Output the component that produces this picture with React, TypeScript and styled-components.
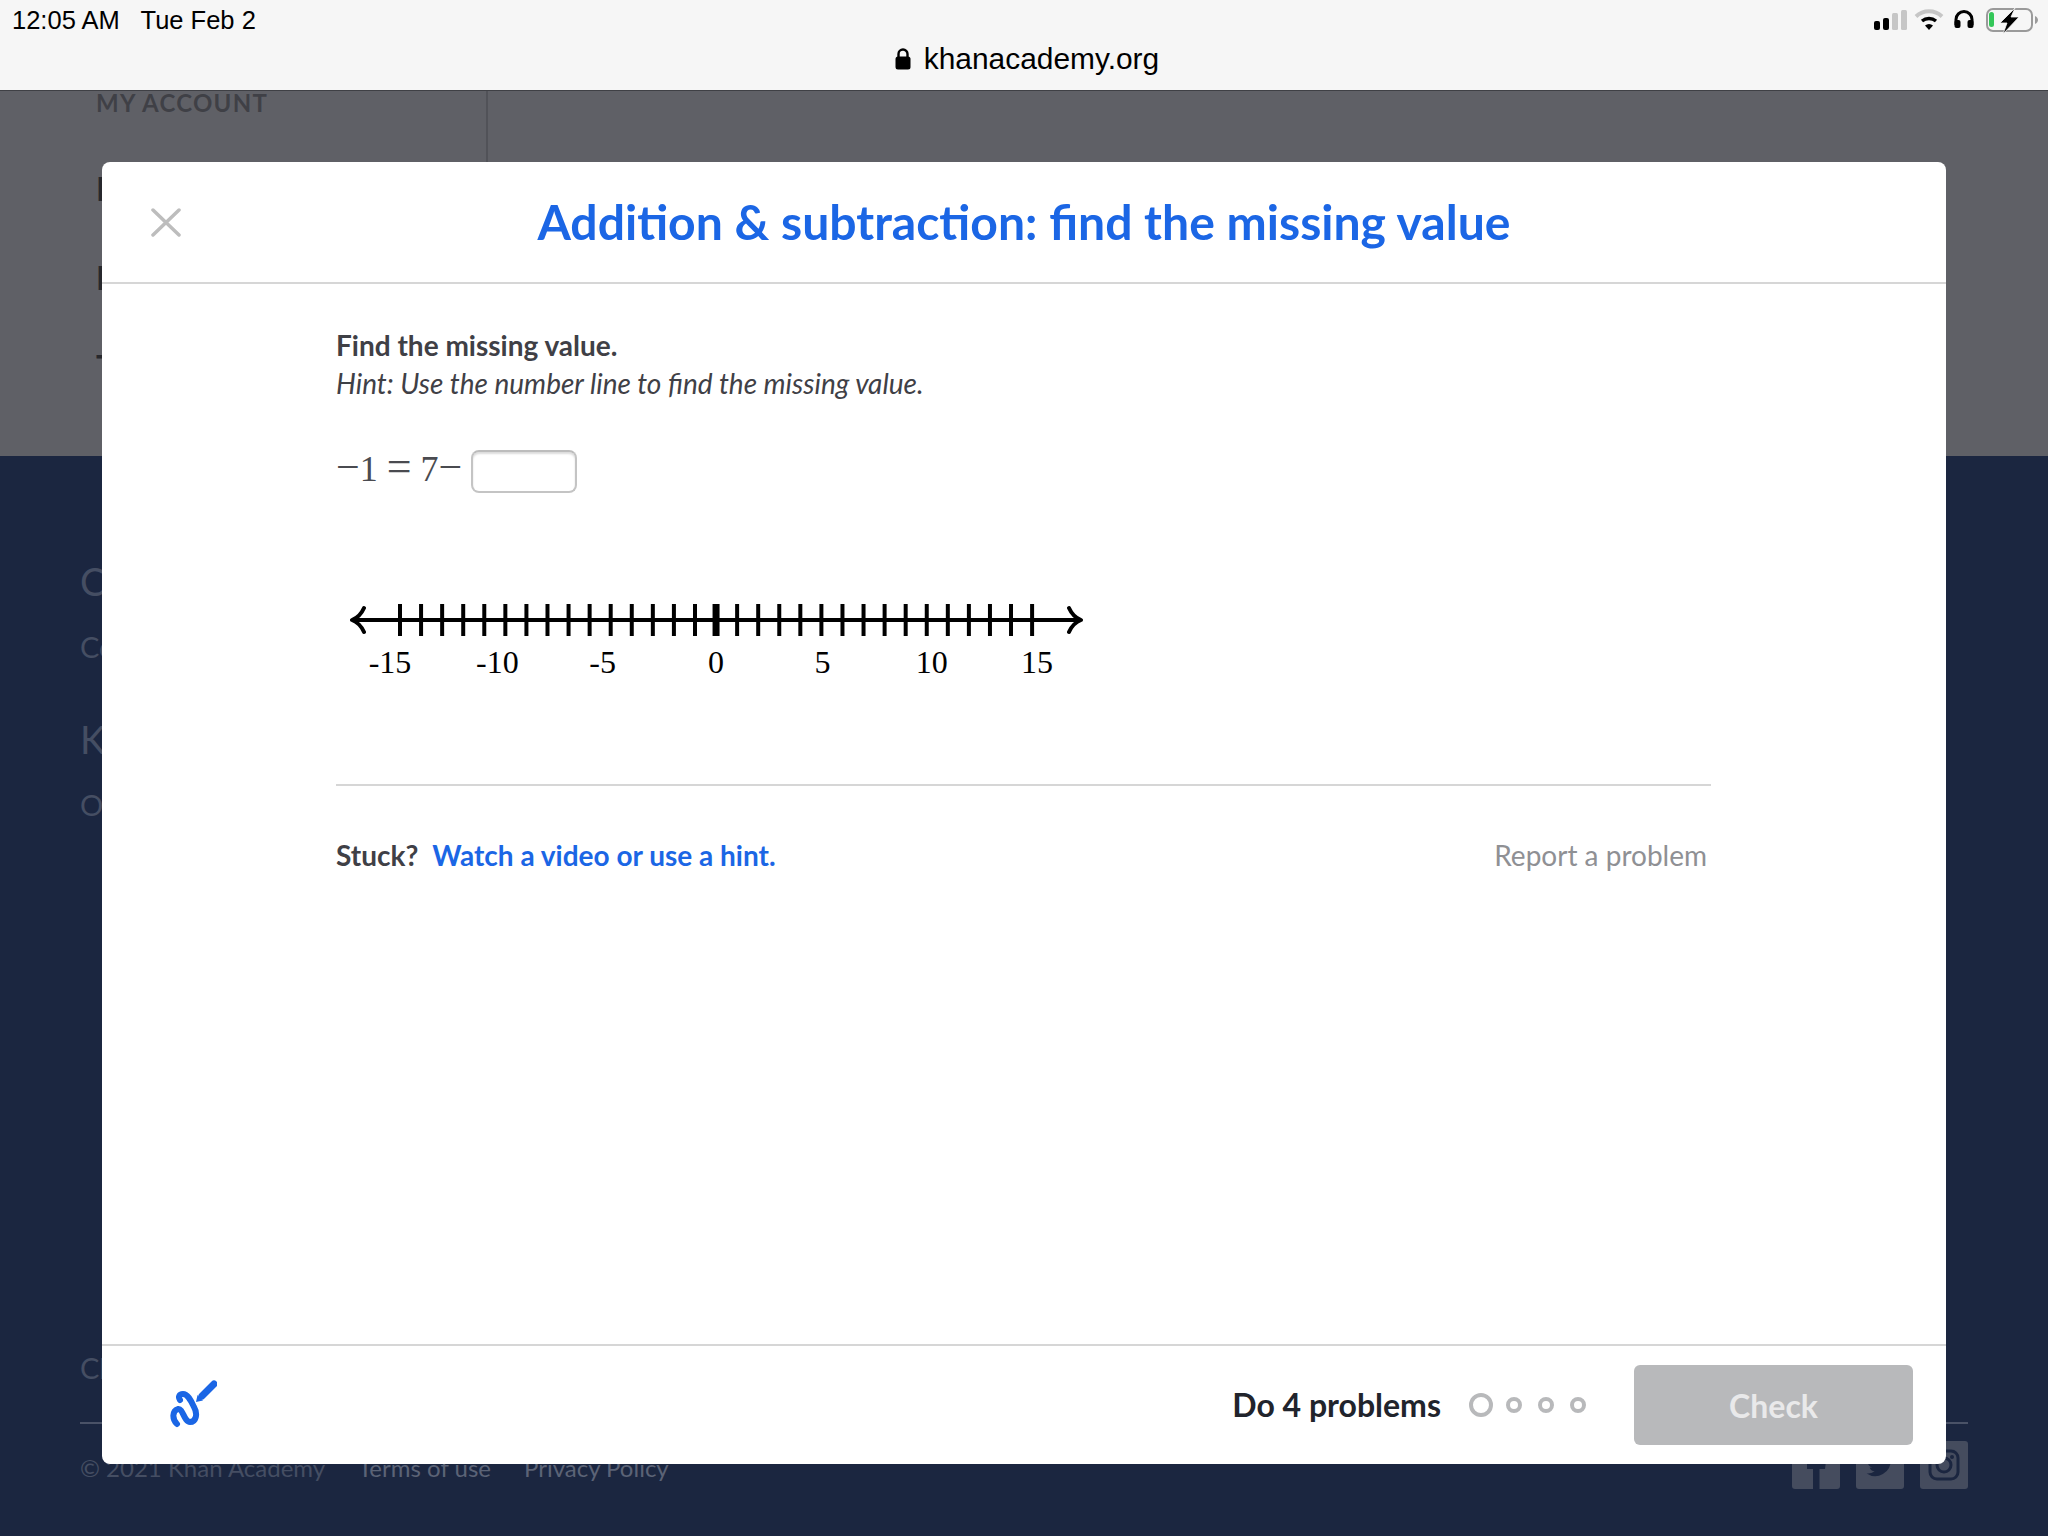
import React from 'react';
import styled, { createGlobalStyle } from 'styled-components';

const GlobalStyle = createGlobalStyle`
  html, body { margin: 0; padding: 0; }
  body { width: 2048px; height: 1536px; overflow: hidden; background: #1b2640; font-family: "Lato", "Liberation Sans", sans-serif; }
`;

const Page = styled.div`
  position: relative;
  width: 2048px;
  height: 1536px;
  display: flex;
  flex-direction: column;
  overflow: hidden;
`;

const StatusBar = styled.header`
  height: 91px;
  flex: none;
  box-sizing: border-box;
  background: #f6f6f6;
  border-bottom: 1px solid #3f4045;
  display: grid;
  grid-template-columns: 1fr auto 1fr;
  padding: 0 10px 0 12px;
  font-family: "Liberation Sans", sans-serif;
  color: #000;
`;

const Clock = styled.div`
  font-size: 25.5px;
  line-height: 40px;
  white-space: pre;
`;

const Address = styled.div`
  display: flex;
  align-items: center;
  gap: 13px;
  font-size: 29.9px;
  height: 89px;
  padding-top: 28px;
  margin-left: 4px;
  box-sizing: border-box;
`;

const StatusIcons = styled.div`
  display: flex;
  justify-content: flex-end;
  align-items: flex-start;
  padding-top: 8px;
`;

const Account = styled.section`
  height: 365px;
  flex: none;
  background: #5f6066;
  display: flex;
`;

const Sidebar = styled.aside`
  width: 488px;
  box-sizing: border-box;
  padding-left: 96px;
  border-right: 2px solid #515258;
  color: #3f4046;
  display: flex;
  flex-direction: column;
`;

const SidebarTitle = styled.div`
  font-size: 24px;
  font-weight: 700;
  letter-spacing: 1.25px;
  line-height: 26px;
  margin-top: -1px;
  margin-bottom: 53px;
`;

const SidebarItem = styled.div`
  font-size: 32px;
  line-height: 40px;
  font-weight: 700;
  margin-bottom: 49px;
  color: #27282d;
`;

const Footer = styled.footer`
  flex: 1;
  background: #1b2640;
  color: #454e63;
  padding: 0 80px;
  display: flex;
  flex-direction: column;
`;

const FooterHeading = styled.div`
  font-size: 38px;
  line-height: 46px;
`;

const FooterBody = styled.div`
  font-size: 29px;
  line-height: 34px;
  margin-top: 26px;
`;

const FooterBlock = styled.div<{ $top: number }>`
  margin-top: ${p => p.$top}px;
`;

const FooterRule = styled.div`
  height: 2px;
  background: #4a5267;
  margin-top: 37px;
`;

const FooterBottom = styled.div`
  display: flex;
  align-items: flex-start;
  justify-content: space-between;
  margin-top: 17px;
`;

const LegalRow = styled.div`
  display: flex;
  gap: 33px;
  font-size: 24px;
  line-height: 54px;
`;

const LegalLink = styled.span`
  color: #5b6376;
`;

const Socials = styled.div`
  display: flex;
  gap: 16px;
`;

const SocialBox = styled.div`
  width: 48px;
  height: 48px;
  border-radius: 3px;
  background: #454c5e;
  color: #1b2640;
  display: flex;
  align-items: center;
  justify-content: center;
`;

const Modal = styled.div`
  position: absolute;
  left: 102px;
  top: 162px;
  width: 1844px;
  height: 1302px;
  background: #fff;
  border-radius: 8px;
  display: flex;
  flex-direction: column;
  overflow: hidden;
`;

const ModalHeader = styled.div`
  height: 122px;
  flex: none;
  box-sizing: border-box;
  border-bottom: 2px solid #d6d6d6;
  display: flex;
  align-items: center;
  justify-content: center;
  position: relative;
`;

const CloseButton = styled.div`
  position: absolute;
  left: 49px;
  top: 46px;
  width: 30px;
  height: 29px;
  display: flex;
`;

const Title = styled.h1`
  margin: 0;
  font-size: 48.1px;
  font-weight: 700;
  color: #1b66e5;
  line-height: 1;
`;

const Exercise = styled.main`
  flex: 1;
  padding: 42px 235px 0 234px;
  display: flex;
  flex-direction: column;
`;

const Prompt = styled.div`
  font-size: 28px;
  line-height: 38px;
  font-weight: 700;
  color: #3f4046;
`;

const Hint = styled.div`
  font-size: 28px;
  font-style: italic;
  line-height: 38px;
  color: #3f4046;
`;

const Equation = styled.div`
  display: flex;
  align-items: center;
  margin-top: 48px;
  height: 43px;
  font-family: "Liberation Serif", serif;
  font-size: 36px;
  color: #4a4b50;
`;

const MathText = styled.span`
  margin-bottom: 6px;
  line-height: 40px;
`;

const Relation = styled.span`
  font-size: 44px;
  line-height: 0;
  margin: 0 9px;
`;

const Minus = styled.span`
  font-size: 42px;
  line-height: 0;
`;

const AnswerBox = styled.div`
  width: 106px;
  height: 43px;
  box-sizing: border-box;
  margin-left: 9px;
  border: 2px solid #c4c4c4;
  border-top-color: #bcbcbc;
  border-radius: 8px;
  box-shadow: inset 0 2px 2px #dcdcdc;
  background: #fff;
`;

const NumberLine = styled.svg`
  display: block;
  margin-top: 97px;
  width: 750px;
  height: 90px;
  flex: none;
`;

const Rule = styled.div`
  height: 2px;
  background: #d6d6d6;
  margin-top: 104px;
`;

const HelpRow = styled.div`
  display: flex;
  justify-content: space-between;
  align-items: center;
  margin-top: 51px;
  padding-right: 4px;
  font-size: 28px;
  line-height: 36px;
`;

const Stuck = styled.div`
  display: flex;
  gap: 14px;
  font-weight: 700;
  color: #3f4046;
`;

const HelpLink = styled.span`
  color: #1b66e5;
`;

const ReportLink = styled.span`
  color: #8f9094;
`;

const ModalFooter = styled.div`
  height: 120px;
  flex: none;
  box-sizing: border-box;
  border-top: 2px solid #d6d6d6;
  display: flex;
  align-items: center;
  padding: 0 33px 0 68px;
`;

const ScratchIcon = styled.svg`
  width: 47px;
  height: 48px;
  margin-top: -3px;
`;

const Progress = styled.div`
  margin-left: auto;
  display: flex;
  align-items: center;
`;

const ProgressLabel = styled.span`
  font-size: 32px;
  font-weight: 700;
  color: #21242c;
  margin-right: 28px;
  margin-top: -2px;
`;

const Dots = styled.div`
  display: flex;
  align-items: center;
  gap: 16px;
  margin-right: 48px;
`;

const Dot = styled.span<{ $current?: boolean }>`
  display: block;
  box-sizing: border-box;
  width: ${p => (p.$current ? 24 : 16)}px;
  height: ${p => (p.$current ? 24 : 16)}px;
  margin-right: ${p => (p.$current ? -3 : 0)}px;
  border: 4px solid #b8b9bb;
  border-radius: 50%;
`;

const CheckButton = styled.div`
  width: 279px;
  height: 80px;
  border-radius: 6px;
  background: #b8b9bb;
  color: #e9e9ea;
  font-size: 32px;
  font-weight: 700;
  display: flex;
  align-items: center;
  justify-content: center;
`;

const TICK_LEFT = 64;
const TICK_STEP = 21.07;
const ticks = Array.from({ length: 31 }, (_, i) => i - 15);
const labels = [
  { value: -15, dx: -10 },
  { value: -10, dx: -8 },
  { value: -5, dx: -8 },
  { value: 0, dx: 0 },
  { value: 5, dx: 1 },
  { value: 10, dx: 5 },
  { value: 15, dx: 5 },
];

const tickX = (v: number) => TICK_LEFT + (v + 15) * TICK_STEP;

const NumberLineChart = () => (
  <NumberLine viewBox="0 0 750 90">
    <path d="M16 30H745" stroke="#000" strokeWidth="4" fill="none" />
    <path
      d="M28 18Q24 27 16 30Q24 33 28 42M733 18Q737 27 745 30Q737 33 733 42"
      stroke="#000"
      strokeWidth="4"
      strokeLinecap="round"
      strokeLinejoin="round"
      fill="none"
    />
    {ticks.map(v => (
      <line key={v} x1={tickX(v)} x2={tickX(v)} y1="14" y2="46" stroke="#000" strokeWidth={v === 0 ? 7 : 4} />
    ))}
    {labels.map(l => (
      <text
        key={l.value}
        x={tickX(l.value) + l.dx}
        y="83"
        textAnchor="middle"
        fontFamily='"Liberation Serif", serif'
        fontSize="32"
        fill="#000"
      >
        {l.value}
      </text>
    ))}
  </NumberLine>
);

export default function App() {
  return (
    <Page>
      <GlobalStyle />
      <StatusBar>
        <Clock>{'12:05 AM   Tue Feb 2'}</Clock>
        <Address>
          <svg width="16" height="24" viewBox="0 0 16 24">
            <path d="M3.500 10V7a4.500 4.500 0 0 1 9 0v3" stroke="#000" strokeWidth="2.400" fill="none" />
            <rect x="0.500" y="9.500" width="15" height="13" rx="2.500" fill="#000" />
          </svg>
          khanacademy.org
        </Address>
        <StatusIcons>
          <svg width="166" height="30" viewBox="0 0 166 30">
            <rect x="2" y="13" width="6" height="9" rx="2" fill="#000" />
            <rect x="11" y="10" width="6" height="12" rx="2" fill="#000" />
            <rect x="20" y="5" width="6" height="17" rx="1.500" fill="#c6c6c6" />
            <rect x="29" y="2" width="6" height="20" rx="1.500" fill="#c6c6c6" />
            <path d="M44 8.500A19 19 0 0 1 70 8.500" stroke="#c6c6c6" strokeWidth="4" fill="none" />
            <path d="M50 13A11 11 0 0 1 64 13" stroke="#000" strokeWidth="3.400" fill="none" />
            <path d="M57 22L53 17.500A6 6 0 0 1 61 17.500z" fill="#000" />
            <path d="M84 17V11.500a8 8 0 0 1 16 0V17" stroke="#000" strokeWidth="3" fill="none" />
            <rect x="82.500" y="12" width="6" height="8" rx="2" fill="#000" />
            <rect x="95.500" y="12" width="6" height="8" rx="2" fill="#000" />
            <rect x="115" y="1" width="45" height="22" rx="6" stroke="#9a9a9a" strokeWidth="2" fill="none" />
            <rect x="117" y="4" width="5" height="15" rx="2.500" fill="#34c759" />
            <path d="M163 8c2 1 3 2.500 3 4s-1 3-3 4z" fill="#9a9a9a" />
            <path d="M143 0L128 15H135L131 26L147 9H139Z" fill="#000" stroke="#f6f6f6" strokeWidth="0.800" />
          </svg>
        </StatusIcons>
      </StatusBar>
      <Account>
        <Sidebar>
          <SidebarTitle>MY ACCOUNT</SidebarTitle>
          <SidebarItem>Profile</SidebarItem>
          <SidebarItem>Learner</SidebarItem>
          <SidebarItem>Teachers</SidebarItem>
        </Sidebar>
      </Account>
      <Footer>
        <FooterBlock $top={102}>
          <FooterHeading>Courses</FooterHeading>
          <FooterBody>Courses</FooterBody>
        </FooterBlock>
        <FooterBlock $top={52}>
          <FooterHeading>Khan Academy</FooterHeading>
          <FooterBody>Our mission</FooterBody>
        </FooterBlock>
        <FooterBlock $top={503}>
          <FooterBody>Change language</FooterBody>
        </FooterBlock>
        <FooterRule />
        <FooterBottom>
          <LegalRow>
            <span>© 2021 Khan Academy</span>
            <LegalLink>Terms of use</LegalLink>
            <LegalLink>Privacy Policy</LegalLink>
          </LegalRow>
          <Socials>
            <SocialBox>
              <svg width="30" height="48" viewBox="0 0 30 48"><path d="M12 48V28H6v-8h6v-6c0-5 3-9 8-9h5v8h-4c-2 0-2.500 1-2.500 2.500V20H25l-1 8h-5.500v20z" fill="currentColor" /></svg>
            </SocialBox>
            <SocialBox>
              <svg width="36" height="32" viewBox="0 0 24 24"><path d="M22 5.900c-.7.300-1.500.6-2.400.7.900-.5 1.500-1.300 1.800-2.300-.8.500-1.700.8-2.600 1a4.100 4.100 0 0 0-7 3.700A11.600 11.600 0 0 1 3.400 4.700a4.100 4.100 0 0 0 1.300 5.500c-.7 0-1.300-.2-1.900-.5 0 2 1.400 3.700 3.300 4.100-.6.200-1.200.2-1.900.1.500 1.600 2 2.800 3.800 2.800A8.300 8.300 0 0 1 2 18.400 11.600 11.600 0 0 0 20 8.100c.8-.6 1.500-1.300 2-2.200z" fill="currentColor" /></svg>
            </SocialBox>
            <SocialBox>
              <svg width="40" height="40" viewBox="0 0 40 40"><rect x="6" y="6" width="28" height="28" rx="7" fill="none" stroke="currentColor" strokeWidth="3" /><circle cx="20" cy="20" r="7" fill="none" stroke="currentColor" strokeWidth="3" /><circle cx="28" cy="12" r="2" fill="currentColor" /></svg>
            </SocialBox>
          </Socials>
        </FooterBottom>
      </Footer>
      <Modal>
        <ModalHeader>
          <CloseButton>
            <svg width="30" height="29" viewBox="0 0 30 29">
              <path d="M2 2L28 27M28 2L2 27" stroke="#bdbdbd" strokeWidth="3.500" strokeLinecap="round" />
            </svg>
          </CloseButton>
          <Title>Addition &amp; subtraction: find the missing value</Title>
        </ModalHeader>
        <Exercise>
          <Prompt>Find the missing value.</Prompt>
          <Hint>Hint: Use the number line to find the missing value.</Hint>
          <Equation>
            <MathText>
              <Minus>−</Minus>1<Relation>=</Relation>7<Minus>−</Minus>
            </MathText>
            <AnswerBox />
          </Equation>
          <NumberLineChart />
          <Rule />
          <HelpRow>
            <Stuck>
              Stuck?
              <HelpLink>Watch a video or use a hint.</HelpLink>
            </Stuck>
            <ReportLink>Report a problem</ReportLink>
          </HelpRow>
        </Exercise>
        <ModalFooter>
          <ScratchIcon viewBox="0 0 47 48">
            <path d="M7 44C2 39 2 31 8 29C13 28 14 42 20 42C26 42 28 34 24 27C21 21 18 14 13 14C9 14 8 17 10 20" stroke="#1b66e5" strokeWidth="6" strokeLinecap="round" strokeLinejoin="round" fill="none" />
            <path d="M44 4L32 16" stroke="#1b66e5" strokeWidth="7" strokeLinecap="round" fill="none" />
            <path d="M26 22l1.500-7 5.500 5.500z" fill="#1b66e5" />
          </ScratchIcon>
          <Progress>
            <ProgressLabel>Do 4 problems</ProgressLabel>
            <Dots>
              <Dot $current />
              <Dot />
              <Dot />
              <Dot />
            </Dots>
            <CheckButton>Check</CheckButton>
          </Progress>
        </ModalFooter>
      </Modal>
    </Page>
  );
}
